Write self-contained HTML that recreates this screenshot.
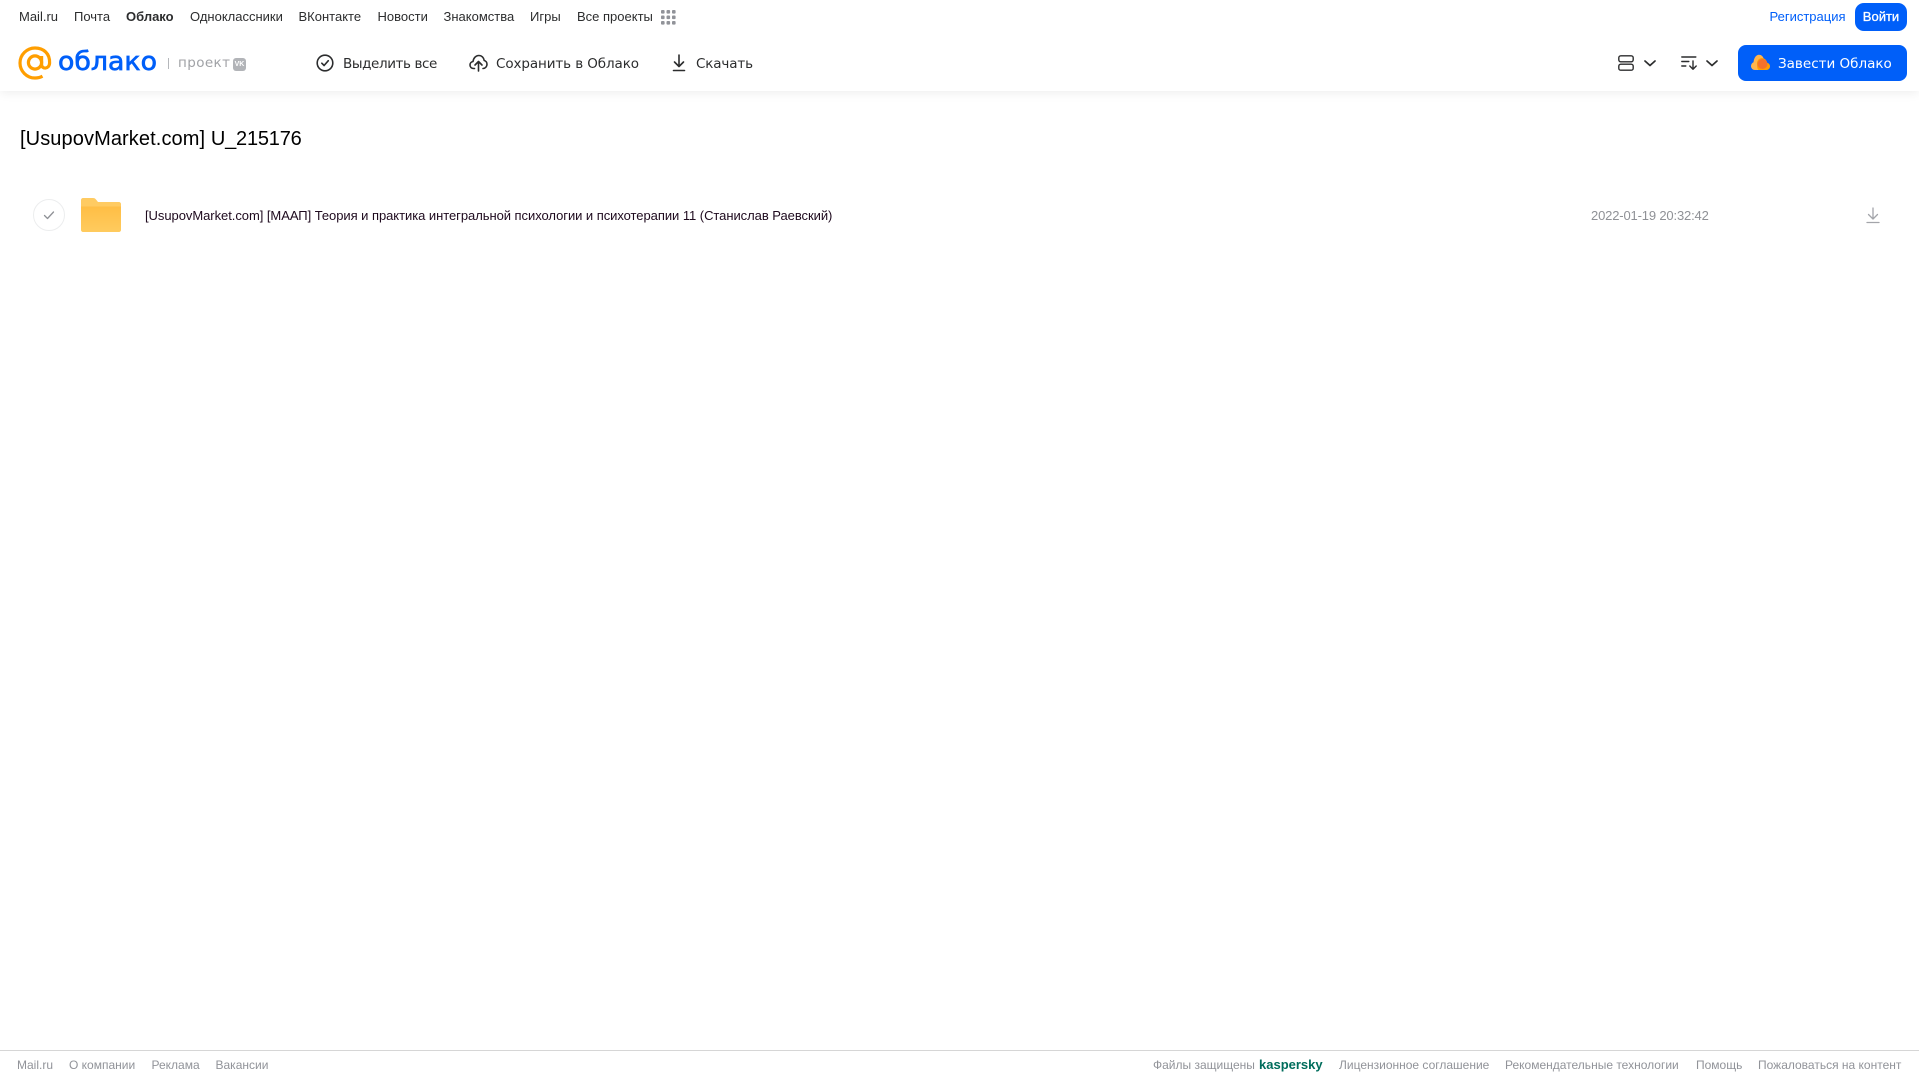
<!DOCTYPE html>
<html lang="ru">
<head>
<meta charset="utf-8">
<title>[UsupovMarket.com] U_215176</title>
<style>
html,body{margin:0;padding:0;background:#fff;width:1919px;height:1079px;overflow:hidden}
body{position:relative;font-family:"Liberation Sans",Arial,sans-serif}
.t{position:absolute;white-space:nowrap;line-height:20px;height:20px}
.n{font-size:13px;color:#2c2d2e;top:7px}
.a{font-family:"DejaVu Sans",sans-serif;font-size:13.5px;color:#2c2d2e;top:53.5px}
.f{font-size:12px;color:#919399;top:1055px}
svg{position:absolute;overflow:visible}
#hdr{position:absolute;left:0;top:0;width:1919px;height:91px;background:#fff;box-shadow:0 2px 10px rgba(0,0,0,.07)}
#fl{position:absolute;left:0;top:1050px;width:1919px;height:1px;background:#d6d6d6}
.btn{position:absolute;background:#005ff9;color:#fff}
</style>
</head>
<body>
<div id="hdr"></div>

<span class="t n" style="left:19px">Mail.ru</span>
<span class="t n" style="left:74px">Почта</span>
<span class="t n" style="left:126px;font-weight:bold">Облако</span>
<span class="t n" style="left:190px">Одноклассники</span>
<span class="t n" style="left:298.500px">ВКонтакте</span>
<span class="t n" style="left:377.500px">Новости</span>
<span class="t n" style="left:443.500px">Знакомства</span>
<span class="t n" style="left:530px">Игры</span>
<span class="t n" style="left:577px">Все проекты</span>
<svg style="left:661px;top:10px" width="15" height="15" viewBox="0 0 15 15" fill="#919399">
<rect x="0" y="0" width="3.6" height="3.6" rx="1"/><rect x="5.5" y="0" width="3.6" height="3.6" rx="1"/><rect x="11" y="0" width="3.6" height="3.6" rx="1"/>
<rect x="0" y="5.5" width="3.6" height="3.6" rx="1"/><rect x="5.5" y="5.5" width="3.6" height="3.6" rx="1"/><rect x="11" y="5.5" width="3.6" height="3.6" rx="1"/>
<rect x="0" y="11" width="3.6" height="3.6" rx="1"/><rect x="5.5" y="11" width="3.6" height="3.6" rx="1"/><rect x="11" y="11" width="3.6" height="3.6" rx="1"/>
</svg>

<span class="t n" style="left:1769.500px;color:#005ff9">Регистрация</span>
<div class="btn" style="left:1855px;top:3px;width:52px;height:28px;border-radius:9px;font-size:13px;line-height:27px;text-align:center;-webkit-text-stroke:.3px #fff">Войти</div>

<!-- logo -->
<svg style="left:18px;top:46px" width="34" height="34" viewBox="0 0 34 34" fill="none" stroke="#ff9e00" stroke-width="3.200">
<circle cx="17" cy="16.5" r="6.6"/>
<path d="M23.600 10v8.500c0 5 7.600 5 8-1.500C32 7.500 25.500 2 17 2 8.800 2 2 8.800 2 17s6.800 15 15 15c3 0 5.300-.6 7.500-1.800"/>
</svg>
<svg style="left:58px;top:44px" width="105" height="36">
<text x="0" y="26" font-family="DejaVu Sans,sans-serif" font-size="26" fill="#005ff9" stroke="#005ff9" stroke-width=".7" textLength="99" lengthAdjust="spacingAndGlyphs">облако</text>
</svg>
<div style="position:absolute;left:168px;top:58px;width:1px;height:11px;background:#b5b7bb"></div>
<span class="t" style="left:178px;top:52.500px;font-family:'DejaVu Sans',sans-serif;font-size:13.5px;letter-spacing:.4px;color:#a0a2a6">проект</span>
<div style="position:absolute;left:233px;top:58px;width:13px;height:13px;border-radius:3px;background:#b2b4b8;color:#fff;font-size:7px;font-weight:bold;line-height:13px;text-align:center">VK</div>

<!-- actions -->
<svg style="left:316px;top:54px" width="18" height="18" viewBox="0 0 18 18" fill="none" stroke="#2c2d2e" stroke-width="1.600" stroke-linecap="round" stroke-linejoin="round">
<circle cx="9" cy="9" r="7.800"/><path d="M5.800 9.200l2.300 2.300 4.200-4.800"/>
</svg>
<span class="t a" style="left:343px;letter-spacing:-.4px">Выделить все</span>
<svg style="left:469px;top:54px" width="19" height="18" viewBox="0 0 19 18" fill="none" stroke="#2c2d2e" stroke-width="1.600" stroke-linecap="round" stroke-linejoin="round">
<path d="M5.500 14.500H4.600C2.500 14.500 1 13 1 11c0-1.800 1.300-3.200 3-3.500C4.500 4 6.800 1.500 9.800 1.500c3 0 5 2.200 5.400 5 1.700.4 2.800 2 2.800 3.700 0 2.400-1.700 4.300-4 4.300"/>
<path d="M9.500 17V8M6 11l3.500-3.500L13 11"/>
</svg>
<span class="t a" style="left:496px;letter-spacing:-.1px">Сохранить в Облако</span>
<svg style="left:672px;top:54px" width="14" height="18" viewBox="0 0 14 18" fill="none" stroke="#2c2d2e" stroke-width="1.600" stroke-linecap="round" stroke-linejoin="round">
<path d="M7 1v11.500M2.500 8L7 12.500 11.500 8M1.500 16.500h11"/>
</svg>
<span class="t a" style="left:696px;letter-spacing:-.15px">Скачать</span>

<svg style="left:1618px;top:55px" width="16" height="16" viewBox="0 0 16 16" fill="none" stroke="#2c2d2e" stroke-width="1.400">
<rect x=".8" y=".8" width="14.400" height="6" rx="2"/><rect x=".8" y="9.200" width="14.400" height="6" rx="2"/>
</svg>
<svg style="left:1644px;top:60px" width="12" height="7" viewBox="0 0 12 7" fill="none" stroke="#2c2d2e" stroke-width="1.700" stroke-linecap="round" stroke-linejoin="round"><path d="M1 1l5 4.500L11 1"/></svg>
<svg style="left:1681px;top:56px" width="17" height="14" viewBox="0 0 17 14" fill="none" stroke="#2c2d2e" stroke-width="1.400" stroke-linecap="round" stroke-linejoin="round">
<path d="M.8 1h14M.8 5.500h7M.8 10h4M12 5v8M8.800 10l3.200 3.200 3.200-3.200"/>
</svg>
<svg style="left:1706px;top:60px" width="12" height="7" viewBox="0 0 12 7" fill="none" stroke="#2c2d2e" stroke-width="1.700" stroke-linecap="round" stroke-linejoin="round"><path d="M1 1l5 4.500L11 1"/></svg>

<div class="btn" style="left:1738px;top:45px;width:169px;height:36px;border-radius:8px"></div>
<svg style="left:1751px;top:54px" width="19" height="17" viewBox="0 0 19 17">
<path fill="#ffb54d" d="M4 16C1.800 16 0 14.300 0 12c0-1.700 1-3.100 2.500-3.700C3 4 5 .8 8 .8c2.300 0 4 1.600 4.600 3.700L12 16z"/>
<path fill="#ff9e00" d="M8 16h7.500c2 0 3.500-1.600 3.500-3.600 0-1.800-1.200-3.200-2.800-3.500C15.700 6.200 13.500 4 11 4 8 4 6 6.500 6 9.500 6 13 6.500 16 8 16z"/>
<circle cx="11.500" cy="10" r="5" fill="#f4712b"/>
</svg>
<span class="t a" style="left:1778px;color:#fff">Завести Облако</span>

<!-- title -->
<span class="t" style="left:20px;top:125px;height:28px;line-height:28px;font-size:20px;color:#000"><span style="letter-spacing:.1px">[UsupovMarket.com] </span><span style="letter-spacing:-.2px">U_215176</span></span>

<!-- row -->
<svg style="left:33px;top:199px" width="32" height="32" viewBox="0 0 32 32" fill="none">
<circle cx="16" cy="16" r="15.500" stroke="#ecedee"/>
<path d="M11.500 16.500l3 3 6-6.500" stroke="#8f9196" stroke-width="1.300" stroke-linecap="round" stroke-linejoin="round"/>
</svg>
<svg style="left:81px;top:198px" width="40" height="34" viewBox="0 0 40 34">
<defs><linearGradient id="g" x1="0" y1="0" x2="0" y2="1"><stop offset="0" stop-color="#ffbe45"/><stop offset="1" stop-color="#ffcb5e"/></linearGradient></defs>
<path fill="#ffcb62" d="M2 0h10c1.500 0 2.300.6 3.200 1.700L17 4h21c1.100 0 2 .9 2 2v3H0V2C0 .9.900 0 2 0z"/>
<path fill="url(#g)" d="M0 8.500h40V32c0 1.100-.9 2-2 2H2c-1.100 0-2-.9-2-2z"/>
</svg>
<span class="t" style="left:145px;top:206px;font-size:13px;letter-spacing:-.05px;color:#1e0a1e">[UsupovMarket.com] [МААП] Теория и практика интегральной психологии и психотерапии 11 (Станислав Раевский)</span>
<span class="t" style="left:1591px;top:206px;font-size:13px;letter-spacing:-.16px;color:#8f9196">2022-01-19 20:32:42</span>
<svg style="left:1866px;top:207px" width="14" height="17" viewBox="0 0 14 17" fill="none" stroke="#a3a5aa" stroke-width="1.300" stroke-linecap="round" stroke-linejoin="round">
<path d="M7 1v10.500M2.500 7.500L7 12l4.500-4.500M1 15.500h12"/>
</svg>

<!-- footer -->
<div id="fl"></div>
<span class="t f" style="left:17px">Mail.ru</span>
<span class="t f" style="left:69px">О компании</span>
<span class="t f" style="left:151.500px">Реклама</span>
<span class="t f" style="left:215.500px">Вакансии</span>
<span class="t f" style="left:1153px">Файлы защищены</span>
<span class="t f" style="left:1259px;font-weight:bold;font-size:13px;color:#006d5c">kaspersky</span>
<span class="t f" style="left:1339px">Лицензионное соглашение</span>
<span class="t f" style="left:1505px">Рекомендательные технологии</span>
<span class="t f" style="left:1696px">Помощь</span>
<span class="t f" style="left:1758px">Пожаловаться на контент</span>
</body>
</html>
